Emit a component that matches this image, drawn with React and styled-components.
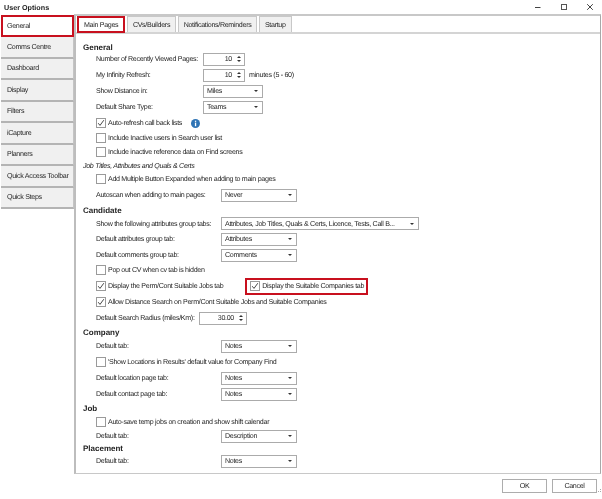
import React from 'react'
import styled, { createGlobalStyle } from 'styled-components'

const GlobalStyle = createGlobalStyle`
    html, body {
        margin: 0;
        padding: 0;
        background: #fff;
    }
    * {
        box-sizing: border-box;
    }
`

const sideItems = ['Comms Centre', 'Dashboard', 'Display', 'Filters', 'iCapture', 'Planners', 'Quick Access Toolbar', 'Quick Steps']
const tabs = ['CVs/Builders', 'Notifications/Reminders', 'Startup']

function Check() {
    return (
        <svg width="8" height="8" viewBox="0 0 8 8">
            <path d="M1.2 4.2 L3 6.4 L6.8 1.2" fill="none" stroke="#333" strokeWidth="0.9" />
        </svg>
    )
}

function CheckRow({ label, checked, gap, children }) {
    return (
        <Row $gap={gap}>
            <CheckBox>{checked && <Check />}</CheckBox>
            <CheckLabel>{label}</CheckLabel>
            {children}
        </Row>
    )
}

function SelectRow({ label, value, labelWidth = 125, width = 76, gap }) {
    return (
        <Row $gap={gap}>
            <Label $width={labelWidth}>{label}</Label>
            <Select $width={width}>
                <span>{value}</span>
                <Caret />
            </Select>
        </Row>
    )
}

function SpinRow({ label, value, labelWidth = 107, width = 42, gap, children }) {
    return (
        <Row $gap={gap}>
            <Label $width={labelWidth}>{label}</Label>
            <Spinner $width={width}>
                <span>{value}</span>
                <Arrows>
                    <ArrowUp />
                    <ArrowDown />
                </Arrows>
            </Spinner>
            {children}
        </Row>
    )
}

export default function App() {
    return (
        <Window>
            <GlobalStyle />
            <TitleBar>
                <Title>User Options</Title>
                <WindowButtons>
                    <svg width="8" height="8" viewBox="0 0 8 8"><path d="M1 4.5 H6.5" stroke="#444" strokeWidth="1" /></svg>
                    <svg width="8" height="8" viewBox="0 0 8 8"><rect x="1.5" y="1.5" width="5" height="5" fill="none" stroke="#555" strokeWidth="1" /></svg>
                    <svg width="8" height="8" viewBox="0 0 8 8"><path d="M1.2 1.2 L6.8 6.8 M6.8 1.2 L1.2 6.8" stroke="#444" strokeWidth="1" /></svg>
                </WindowButtons>
            </TitleBar>

            <Body>
                <Sidebar>
                    <SideItem $active>General</SideItem>
                    {sideItems.map((item) => (
                        <SideItem key={item}>{item}</SideItem>
                    ))}
                </Sidebar>

                <Main>
                    <TabStrip>
                        <Tab $active>Main Pages</Tab>
                        {tabs.map((tab) => (
                            <Tab key={tab}>{tab}</Tab>
                        ))}
                    </TabStrip>

                    <Content>
                        <Heading $gap={0}>General</Heading>
                        <SpinRow label="Number of Recently Viewed Pages:" value="10" gap={0} />
                        <SpinRow label="My Infinity Refresh:" value="10">
                            <Hint>minutes (5 - 60)</Hint>
                        </SpinRow>
                        <SelectRow label="Show Distance in:" value="Miles" labelWidth={107} width={60} />
                        <SelectRow label="Default Share Type:" value="Teams" labelWidth={107} width={60} />
                        <CheckRow label="Auto-refresh call back lists" checked>
                            <InfoIcon width="9" height="9" viewBox="0 0 9 9">
                                <circle cx="4.5" cy="4.5" r="4.5" fill="#2f74b5" />
                                <rect x="3.9" y="3.6" width="1.3" height="3.6" fill="#fff" />
                                <rect x="3.9" y="1.7" width="1.3" height="1.2" fill="#fff" />
                            </InfoIcon>
                        </CheckRow>
                        <CheckRow label="Include Inactive users in Search user list" gap={3} />
                        <CheckRow label="Include inactive reference data on Find screens" gap={2} />
                        <SubHeading>Job Titles, Attributes and Quals &amp; Certs</SubHeading>
                        <CheckRow label="Add Multiple Button Expanded when adding to main pages" gap={1} />
                        <SelectRow label="Autoscan when adding to main pages:" value="Never" />

                        <Heading $gap={3}>Candidate</Heading>
                        <SelectRow
                            label="Show the following attributes group tabs:"
                            value="Attributes, Job Titles, Quals & Certs, Licence, Tests, Call B..."
                            width={198}
                            gap={1.5}
                        />
                        <SelectRow label="Default attributes group tab:" value="Attributes" gap={3.5} />
                        <SelectRow label="Default comments group tab:" value="Comments" />
                        <CheckRow label="Pop out CV when cv tab is hidden" gap={3} />
                        <CheckRow label="Display the Perm/Cont Suitable Jobs tab" checked>
                            <Marked>
                                <CheckBox><Check /></CheckBox>
                                <CheckLabel>Display the Suitable Companies tab</CheckLabel>
                            </Marked>
                        </CheckRow>
                        <CheckRow label="Allow Distance Search on Perm/Cont Suitable Jobs and Suitable Companies" checked />
                        <SpinRow label="Default Search Radius (miles/Km):" value="30.00" labelWidth={103} width={48} />

                        <Heading $gap={2}>Company</Heading>
                        <SelectRow label="Default tab:" value="Notes" gap={2} />
                        <CheckRow label="'Show Locations in Results' default value for Company Find" />
                        <SelectRow label="Default location page tab:" value="Notes" />
                        <SelectRow label="Default contact page tab:" value="Notes" />

                        <Heading $gap={2}>Job</Heading>
                        <CheckRow label="Auto-save temp jobs on creation and show shift calendar" gap={1.5} />
                        <SelectRow label="Default tab:" value="Description" gap={2.5} />

                        <Heading $gap={0}>Placement</Heading>
                        <SelectRow label="Default tab:" value="Notes" gap={1} />
                    </Content>
                </Main>
            </Body>

            <Footer>
                <FooterButton>OK</FooterButton>
                <FooterButton>Cancel</FooterButton>
                <Grip width="4" height="4" viewBox="0 0 4 4">
                    <rect x="2" y="0" width="1" height="1" fill="#aaa" />
                    <rect x="0" y="2" width="1" height="1" fill="#aaa" />
                    <rect x="2" y="2" width="1" height="1" fill="#aaa" />
                </Grip>
            </Footer>
        </Window>
    )
}

const Window = styled.div`
    display: flex;
    flex-direction: column;
    width: 602px;
    height: 499px;
    overflow: hidden;
    background: #fff;
    color: #262626;
    font-family: "Liberation Sans", Arial, sans-serif;
    font-size: 7.1px;
    letter-spacing: -0.31px;
    text-rendering: geometricPrecision;
    filter: blur(0.25px);
`

const TitleBar = styled.div`
    display: flex;
    align-items: center;
    justify-content: space-between;
    height: 14px;
    padding: 0 8px 0 4px;
`

const Title = styled.div`
    font-size: 7.2px;
    font-weight: 700;
    letter-spacing: 0;
    color: #222;
`

const WindowButtons = styled.div`
    display: flex;
    gap: 18px;
`

const Body = styled.div`
    display: flex;
    height: 460px;
`

const Sidebar = styled.div`
    display: flex;
    flex-direction: column;
    width: 74px;
    flex-shrink: 0;
    padding-top: 1px;
    padding-left: 1px;
`

const SideItem = styled.div`
    display: flex;
    align-items: center;
    flex-shrink: 0;
    height: ${({ $active }) => ($active ? '22px' : '21.5px')};
    padding-left: ${({ $active }) => ($active ? '4px' : '6px')};
    white-space: nowrap;
    background: ${({ $active }) => ($active ? '#fff' : '#f0f0f0')};
    border: ${({ $active }) => ($active ? '2px solid #c8101e' : 'none')};
    border-bottom: ${({ $active }) => ($active ? '2px solid #c8101e' : '2px solid #b4b4b4')};
    border-right: ${({ $active }) => ($active ? '2px solid #c8101e' : '1px solid #c4c4c4')};
`

const Main = styled.div`
    display: flex;
    flex-direction: column;
    flex: 1;
    border: 1px solid #c8c8c8;
    border-top-width: 2px;
    border-bottom-width: 1px;
    border-left: 2px solid #bdbdbd;
    border-right-color: #a8a8a8;
    margin-right: 1px;
`

const TabStrip = styled.div`
    display: flex;
    align-items: flex-end;
    gap: 1.5px;
    height: 18px;
    padding-left: 1px;
    background: #fff;
    border-bottom: 2px solid #d4d4d4;
`

const Tab = styled.div`
    display: flex;
    align-items: center;
    height: ${({ $active }) => ($active ? '17px' : '16px')};
    padding: 0 5px;
    margin-bottom: ${({ $active }) => ($active ? '-1px' : '0')};
    white-space: nowrap;
    background: ${({ $active }) => ($active ? '#fff' : '#f0f0f0')};
    border: ${({ $active }) => ($active ? '2px solid #c8101e' : '1px solid #c8c8c8')};
    border-bottom: ${({ $active }) => ($active ? '2px solid #c8101e' : 'none')};
`

const Content = styled.div`
    display: flex;
    flex-direction: column;
    flex: 1;
    padding: 7px 0 0 7px;
`

const Heading = styled.div`
    display: flex;
    align-items: center;
    flex-shrink: 0;
    height: 12px;
    margin-top: ${({ $gap }) => $gap}px;
    font-size: 8px;
    font-weight: 700;
    letter-spacing: 0;
    color: #222;
`

const SubHeading = styled.div`
    display: flex;
    align-items: center;
    flex-shrink: 0;
    height: 12px;
    margin-top: 2px;
    font-style: italic;
`

const Row = styled.div`
    display: flex;
    align-items: center;
    flex-shrink: 0;
    height: 12px;
    margin-top: ${({ $gap = 4 }) => $gap}px;
    margin-left: 13px;
`

const Label = styled.div`
    width: ${({ $width }) => $width}px;
    flex-shrink: 0;
    white-space: nowrap;
`

const Hint = styled.div`
    margin-left: 4px;
    white-space: nowrap;
`

const CheckBox = styled.div`
    display: flex;
    align-items: center;
    justify-content: center;
    width: 10px;
    height: 10px;
    flex-shrink: 0;
    background: #fff;
    border: 1px solid #9a9a9a;
`

const CheckLabel = styled.div`
    margin-left: 2px;
    white-space: nowrap;
`

const InfoIcon = styled.svg`
    margin-left: 9px;
    flex-shrink: 0;
`

const Marked = styled.div`
    display: flex;
    align-items: center;
    width: 123px;
    height: 17px;
    margin-left: 22px;
    padding: 0 3px;
    background: #fff;
    border: 2px solid #c8101e;
`

const Select = styled.div`
    display: flex;
    align-items: center;
    justify-content: space-between;
    width: ${({ $width }) => $width}px;
    height: 13px;
    padding: 0 4px 0 3px;
    flex-shrink: 0;
    white-space: nowrap;
    background: #fff;
    border: 1px solid #ababab;
`

const Caret = styled.span`
    width: 0;
    height: 0;
    border-left: 2px solid transparent;
    border-right: 2px solid transparent;
    border-top: 2px solid #333;
`

const Spinner = styled.div`
    display: flex;
    align-items: center;
    justify-content: flex-end;
    gap: 5px;
    width: ${({ $width }) => $width}px;
    height: 13px;
    padding-right: 3px;
    flex-shrink: 0;
    background: #fff;
    border: 1px solid #ababab;
`

const Arrows = styled.div`
    display: flex;
    flex-direction: column;
    gap: 2px;
`

const ArrowUp = styled.span`
    width: 0;
    height: 0;
    border-left: 2px solid transparent;
    border-right: 2px solid transparent;
    border-bottom: 2px solid #333;
`

const ArrowDown = styled.span`
    width: 0;
    height: 0;
    border-left: 2px solid transparent;
    border-right: 2px solid transparent;
    border-top: 2px solid #333;
`

const Footer = styled.div`
    position: relative;
    display: flex;
    justify-content: flex-end;
    gap: 5px;
    padding: 5px 5px 0 0;
`

const FooterButton = styled.div`
    display: flex;
    align-items: center;
    justify-content: center;
    width: 45px;
    height: 14px;
    background: #fff;
    border: 1px solid #adadad;
`

const Grip = styled.svg`
    position: absolute;
    right: 0;
    bottom: 0;
`
